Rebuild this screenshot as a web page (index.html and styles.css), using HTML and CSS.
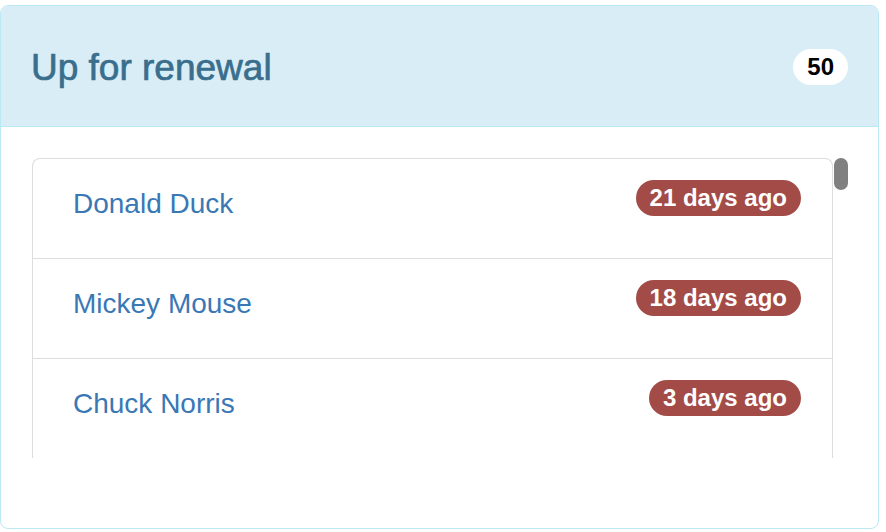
FILE: index.html
```html
<!DOCTYPE html>
<html lang="en">
<head>
    <meta charset="UTF-8" />
    <meta name="viewport" content="width=device-width, initial-scale=1" />
    <title>Up for renewal</title>
    <link rel="stylesheet" href="styles.css">
</head>
<body>

    <!-- Renewal panel -->
    <div class="panel">
        <div class="panel-heading">
            <h3 class="panel-title">Up for renewal</h3>
            <span class="count">50</span>
        </div>
        <div class="panel-body">
            <div class="scroll-box">
                <ul class="renewal-list">
                    <li><a href="#">Donald Duck</a><span class="age">21 days ago</span></li>
                    <li><a href="#">Mickey Mouse</a><span class="age">18 days ago</span></li>
                    <li><a href="#">Chuck Norris</a><span class="age">3 days ago</span></li>
                </ul>
                <div class="scroll-track">
                    <div class="scroll-thumb"></div>
                </div>
            </div>
        </div>
    </div>

</body>
</html>
```

FILE: styles.css
```css
body {
    margin: 0;
    padding: 5px 0 0 0;
    font-family: "Liberation Sans", Arial, sans-serif;
    background: #fff;
}

.panel {
    width: 879px;
    height: 524px;
    box-sizing: border-box;
    border: 1px solid #bce8f1;
    border-radius: 8px;
    background: #fff;
    overflow: hidden;
}

.panel-heading {
    display: flex;
    align-items: center;
    justify-content: space-between;
    height: 121px;
    box-sizing: border-box;
    padding: 2px 30px 0 30px;
    background: #d9edf7;
    border-bottom: 1px solid #bce8f1;
}

.panel-title {
    margin: 0;
    font-size: 37px;
    font-weight: normal;
    line-height: 1;
    color: #3a6e8d;
    -webkit-text-stroke: 0.7px #3a6e8d;
}

.count {
    background: #fff;
    color: #000;
    font-size: 24px;
    font-weight: bold;
    line-height: 1;
    padding: 6px 14px;
    border-radius: 18px;
}

.panel-body {
    padding: 31px 29px 0 31px;
}

/* list plus a drawn scrollbar */
.scroll-box {
    display: flex;
    height: 300px;
    overflow: hidden;
}

.scroll-track {
    width: 15px;
    padding-left: 1px;
}

.scroll-thumb {
    width: 14px;
    height: 32px;
    background: #808080;
    border-radius: 7px;
}

.renewal-list {
    flex: 1;
    list-style: none;
    margin: 0;
    padding: 0;
    border: 1px solid #ddd;
    border-bottom: none;
    border-radius: 8px 8px 0 0;
}

    .renewal-list li {
        display: flex;
        justify-content: space-between;
        align-items: flex-start;
        height: 100px;
        box-sizing: border-box;
        padding: 21px 31px 0 40px;
        border-top: 1px solid #ddd;
    }

    .renewal-list li:first-child {
        border-top: none;
        height: 99px;
    }

    .renewal-list a {
        margin-top: 10px;
        font-size: 28px;
        line-height: 1;
        color: #3a78b5;
        text-decoration: none;
    }

.age {
    background: #a34b47;
    color: #fff;
    font-size: 24px;
    font-weight: bold;
    line-height: 1;
    padding: 6px 14px;
    border-radius: 18px;
}
```
